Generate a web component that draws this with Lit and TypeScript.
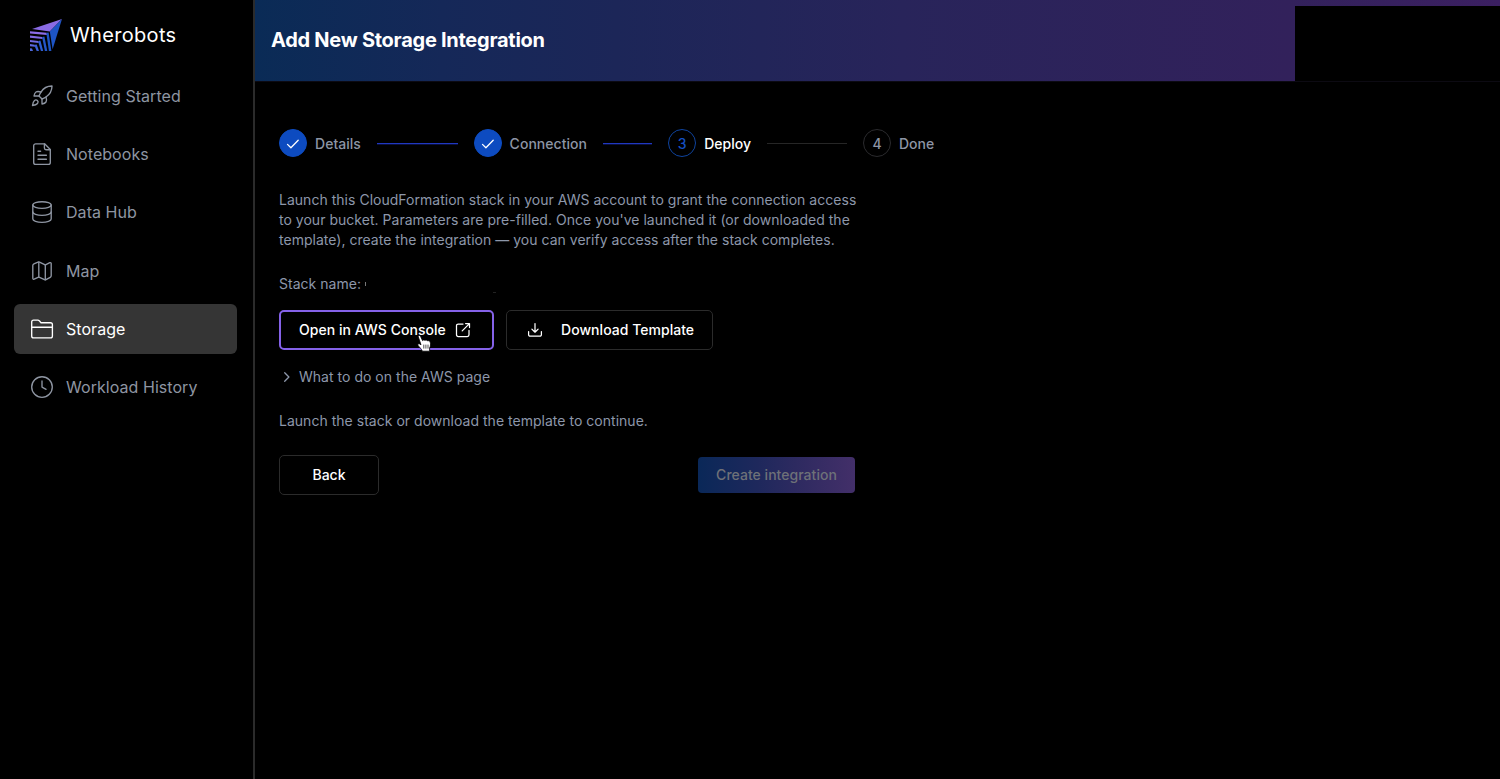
import { LitElement, html, css, svg } from "lit";
import { customElement } from "lit/decorators.js";
import { classMap } from "lit/directives/class-map.js";

const navItems = [
  {
    label: "Getting Started",
    icon: svg`<path d="M4.5 16.5c-1.5 1.26-2 5-2 5s3.74-.5 5-2c.71-.84.7-2.13-.09-2.91a2.18 2.18 0 0 0-2.91-.09z"/><path d="m12 15-3-3a22 22 0 0 1 2-3.95A12.88 12.88 0 0 1 22 2c0 2.72-.78 7.5-6 11a22.35 22.35 0 0 1-4 2z"/><path d="M9 12H4s.55-3.03 2-4c1.62-1.08 5 0 5 0"/><path d="M12 15v5s3.03-.55 4-2c1.08-1.62 0-5 0-5"/>`,
  },
  {
    label: "Notebooks",
    icon: svg`<path d="M14.6 1.8H5.7a2 2 0 0 0-2 2v16.6a2 2 0 0 0 2 2h12.6a2 2 0 0 0 2-2V7.5z"/><path d="M14.4 1.8v4.3a1.6 1.6 0 0 0 1.6 1.6h4.3"/><path d="M8 9.2h2.6M8 13.2h8.4M8 17.2h8.4"/>`,
  },
  {
    label: "Data Hub",
    icon: svg`<ellipse cx="12" cy="5" rx="9.2" ry="3.3"/><path d="M2.8 5v14c0 1.8 4.1 3.3 9.2 3.3s9.2-1.5 9.2-3.3V5"/><path d="M2.8 12c0 1.8 4.1 3.3 9.2 3.3s9.2-1.5 9.2-3.3"/>`,
  },
  {
    label: "Map",
    icon: svg`<path d="M2.8 6.6c0-.8.4-1.4 1.1-1.7L8 3.2c.5-.2 1-.2 1.5 0l5.2 2.5c.4.2.9.2 1.3 0l3.8-2c.7-.3 1.4.1 1.4.9v12.2c0 .7-.4 1.3-1 1.6L16 20.7c-.5.2-1 .2-1.5 0l-5-2.4c-.5-.2-1-.2-1.5 0l-3.8 1.9c-.7.3-1.4-.1-1.4-.9z"/><path d="M8.8 3.2v15M15.3 5.9v14.9"/>`,
  },
  {
    label: "Storage",
    active: true,
    icon: svg`<path d="M1.7 5c0-1.1.9-1.9 1.9-1.9h4.2c.6 0 1.1.2 1.5.7l1.7 1.9h9.5c1.1 0 1.9.9 1.9 1.9v11.4c0 1.1-.9 1.9-1.9 1.9H3.6c-1.1 0-1.9-.9-1.9-1.9z"/><path d="M1.9 10.2h20.3"/>`,
  },
  {
    label: "Workload History",
    icon: svg`<circle cx="12" cy="12" r="10.3"/><path d="M12 5.9v6.2l4.1 2.2"/>`,
  },
];

@customElement("app-sidebar")
class AppSidebar extends LitElement {
  static styles = css`
    :host { display: block; width: 253px; flex: none; border-right: 2px solid #2b2b2b; }
    .brand { display: flex; align-items: center; height: 36px; padding: 17px 0 0 28px; }
    .mark { width: 36px; height: 36px; display: block; }
    .name { color: #fff; font-size: 20px; line-height: 28px; letter-spacing: 0.33px; margin-left: 6px; }
    .nav { display: flex; flex-direction: column; gap: 8px; padding: 17.9px 16px 0 14px; }
    .item { display: flex; align-items: center; height: 50.2px; border-radius: 6px; padding-left: 16px; gap: 12px;
      color: #8e95a2; font-size: 16px; }
    .active { background: #353535; color: #fff; }
    .icon { width: 24px; height: 24px; fill: none; stroke: currentColor; stroke-width: 1.35;
      stroke-linecap: round; stroke-linejoin: round; }
    .label { white-space: nowrap; letter-spacing: 0.05px; }
  `;
  render() {
    return html`
      <div class="brand">
        <svg class="mark" viewBox="28 17 36 36">
          <path fill="#8a6be4" d="M62 19 49.8 31.4 32 29z" />
          <path fill="#1d54c4" d="M62 19 52.6 49.3 49.8 31.4z" />
          <path fill="#8c6ce6" d="M30 31.2 46.6 32.8 47 35 30 33.4z" />
          <path fill="#1d54c4" d="M46.5 32.8 48.6 32.4 51.4 51H48.900L46.600 35z" />
          <path fill="#8069e0" d="M30 35.600 42.200 37 42.700 39 30 37.700z" />
          <path fill="#2457c8" d="M42.200 37 44.400 36.600 47.300 51H44.900L42.500 39z" />
          <path fill="#6f69df" d="M30 39.900 38.300 41 38.800 43 30 42z" />
          <path fill="#2e5dd0" d="M38.300 41 40.400 40.600 43.200 51H40.900L38.600 43z" />
          <path fill="#5f68dc" d="M30 44.100 34.700 44.800 35.200 46.700 30 46.200z" />
          <path fill="#3a60d4" d="M34.700 44.800 36.700 44.500 39 51H36.700L34.900 46.700z" />
          <path fill="#4d66da" d="M30 48.300 32 48.500 33 51H30z" />
        </svg>
        <span class="name">Wherobots</span>
      </div>
      <div class="nav">
        ${navItems.map(
          (n) => html`<div class=${classMap({ item: true, active: !!n.active })}>
            <svg class="icon" viewBox="0 0 24 24">${n.icon}</svg>
            <span class="label">${n.label}</span>
          </div>`
        )}
      </div>
    `;
  }
}

@customElement("app-steps")
class AppSteps extends LitElement {
  static styles = css`
    :host { display: grid; grid-template-columns: 194.6px 194.6px 194.8px auto; height: 28px; width: 680px; }
    .step { display: flex; align-items: center; font-size: 14px; font-weight: 500; color: #8d95a5; }
    .dot { width: 28px; height: 28px; box-sizing: border-box; border-radius: 50%; border: 1px solid #2b2b2e;
      display: flex; align-items: center; justify-content: center; margin-right: 8px; flex: none; padding-top: 1px; }
    .text { letter-spacing: 0.03px; white-space: nowrap; padding-top: 1px; }
    .line { flex: 1; height: 1px; margin: 0 16px; background: #262626; }
    .done .dot { background: #0d4bc0; border-color: #0d4bc0; }
    .done .line { background: #2038c0; box-shadow: 0 1px #090f40; }
    .now .dot { border-color: #0f449f; color: #1450c4; }
    .now .text { color: #fff; }
    .check { width: 16px; height: 16px; fill: none; stroke: #fff; stroke-width: 1.3; stroke-linecap: round; stroke-linejoin: round; }
  `;
  render() {
    const check = html`<svg class="check" viewBox="0 0 16 16"><path d="M2.5 8.4 5.9 11.700 13.200 4.200" /></svg>`;
    return html`
      <div class="step done"><span class="dot">${check}</span><span class="text">Details</span><span class="line"></span></div>
      <div class="step done"><span class="dot">${check}</span><span class="text">Connection</span><span class="line"></span></div>
      <div class="step now"><span class="dot">3</span><span class="text">Deploy</span><span class="line"></span></div>
      <div class="step"><span class="dot">4</span><span class="text">Done</span></div>
    `;
  }
}

@customElement("app-root")
class AppRoot extends LitElement {
  static styles = css`
    :host { display: flex; width: 1500px; height: 779px; background: #000; overflow: hidden;
      font-family: Inter, "Liberation Sans", sans-serif; }
    .main { flex: 1; min-width: 0; display: flex; flex-direction: column; }
    .header { display: flex; height: 81px; box-sizing: border-box; padding-top: 6px;
      background: linear-gradient(90deg, #0a2b56 0%, #152858 15%, #1c2658 29%, #28245a 52%, #32215b 83%, #3b1f61 100%); }
    .title { flex: 1; margin: 0; padding: 20px 0 0 16px; color: #fff; font-size: 20px; line-height: 28px;
      font-weight: 700; white-space: nowrap; letter-spacing: -0.27px; }
    .panel { width: 205px; background: #000; }
    .body { border-top: 1px solid #0c0a12; padding: 47px 24px 0; display: flex; flex-direction: column;
      align-items: flex-start; color: #8d97aa; font-size: 14px; line-height: 20px; }
    .row { white-space: nowrap; letter-spacing: 0.022px; }
    .intro { margin-top: 33px; }
    .stack { margin-top: 24px; display: flex; }
    .tick { width: 1px; height: 4px; margin: 8px 0 0 4px; background: #777; }
    .speck { width: 3px; height: 1px; margin: 18px 0 0 127px; background: #222; }
    .actions { display: flex; gap: 12px; margin-top: 16px; }
    .btn { box-sizing: border-box; height: 40px; border: 1px solid #2b2b2b; border-radius: 5px; color: #fff;
      font-weight: 500; display: flex; align-items: center; white-space: nowrap; letter-spacing: 0.03px; }
    .open { position: relative; width: 214.6px; border: 2px solid #8562e8; padding-left: 18px; }
    .download { width: 207px; padding-left: 20px; gap: 18.5px; }
    .open .ico { margin-left: 9.5px; }
    .ico { width: 16px; height: 16px; fill: none; stroke: #fff; stroke-width: 1.25; stroke-linecap: round; stroke-linejoin: round; }
    .cursor { position: absolute; left: 136px; top: 23px; width: 15px; height: 17px; }
    .help { display: flex; align-items: center; margin-top: 17px; }
    .chev { width: 16px; height: 16px; margin-right: 4px; fill: none; stroke: #8d97aa; stroke-width: 1.3; stroke-linecap: round; stroke-linejoin: round; }
    .hint { margin-top: 24px; }
    .foot { display: flex; width: 576px; justify-content: space-between; align-items: center; margin-top: 24px; }
    .back { width: 100px; justify-content: center; }
    .create { width: 157px; height: 36px; border: 0; justify-content: center; border-radius: 4px; color: #6e7178;
      background: linear-gradient(90deg, #0a2858, #1e285c 38%, #2d2a60 62%, #432f69); }
  `;
  render() {
    return html`
      <app-sidebar></app-sidebar>
      <div class="main">
        <div class="header">
          <h1 class="title">Add New Storage Integration</h1>
          <div class="panel"></div>
        </div>
        <div class="body">
          <app-steps></app-steps>
          <div class="intro">
            <div class="row">Launch this CloudFormation stack in your AWS account to grant the connection access</div>
            <div class="row">to your bucket. Parameters are pre-filled. Once you've launched it (or downloaded the</div>
            <div class="row">template), create the integration — you can verify access after the stack completes.</div>
          </div>
          <div class="stack"><span class="row">Stack name:</span><span class="tick"></span><span class="speck"></span></div>
          <div class="actions">
            <div class="btn open">
              <span>Open in AWS Console</span>
              <svg class="ico" viewBox="0 0 16 16"><path d="M8 2H3.2A1.7 1.7 0 0 0 1.5 3.7v9.1a1.7 1.7 0 0 0 1.7 1.7h9.1a1.7 1.7 0 0 0 1.7-1.7V8.4M10.6 1.6h3.9v3.9M14.2 1.9 7.2 8.9" /></svg>
              <svg class="cursor" viewBox="0 0 15 17">
                <path fill="#fff" stroke="#000" stroke-width=".8" stroke-linejoin="round" d="M1.1 1.200C1.800.1 3.100.4 3.600 1.400L5.500 5.600C6.200 4.700 7.400 4.700 8 5.500C8.800 4.800 10.100 5 10.600 5.900C11.600 5.400 12.800 5.900 13.100 6.800C13.800 8.800 13.700 11.100 12.600 13V16.200H5.400C4.600 14 2.500 12.400 1.100 10.500C.4 9.300 1.300 8.300 2.600 8.900L4 9.800z" />
                <path fill="none" stroke="#222" stroke-width=".8" d="M6.800 9.600v4M8.900 9.600v4M11 9.600v4" />
              </svg>
            </div>
            <div class="btn download">
              <svg class="ico" viewBox="0 0 16 16"><path d="M1.6 9.500v3.200a1.500 1.500 0 0 0 1.500 1.500h9.800a1.500 1.500 0 0 0 1.500-1.500V9.500M8 1.500v8.600M4.900 7.100 8 10.200l3.100-3.100" /></svg>
              <span>Download Template</span>
            </div>
          </div>
          <div class="help">
            <svg class="chev" viewBox="0 0 16 16"><path d="M5.700 3.800 9.900 8l-4.200 4.200" /></svg>
            <span class="row">What to do on the AWS page</span>
          </div>
          <div class="row hint">Launch the stack or download the template to continue.</div>
          <div class="foot">
            <div class="btn back">Back</div>
            <div class="btn create">Create integration</div>
          </div>
        </div>
      </div>
    `;
  }
}
